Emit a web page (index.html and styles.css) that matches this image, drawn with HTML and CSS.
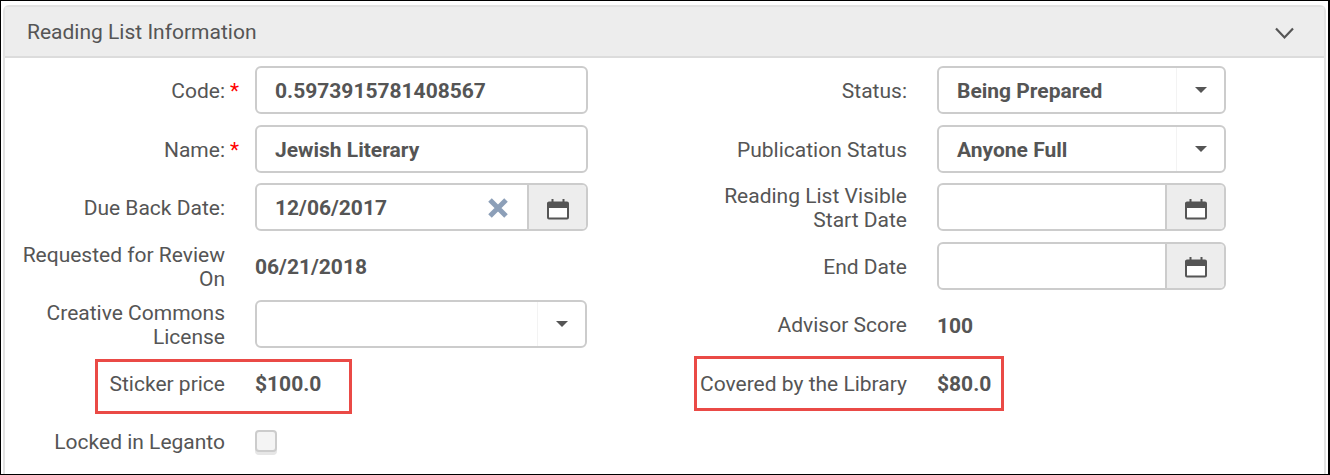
FILE: index.html
```html
<!DOCTYPE html>
<html lang="en">
<head>
<meta charset="utf-8">
<title>Reading List Information</title>
<link rel="stylesheet" href="styles.css">
</head>
<body>
<div class="frame">
  <section class="panel">
    <header class="panel-head">
      <h2 class="panel-title">Reading List Information</h2>
      <svg class="chevron" width="19" height="13" viewBox="0 0 19 13"><path d="M1 1.500 9.500 10.500l8.500-9" fill="none" stroke="#555" stroke-width="2.200"/></svg>
    </header>
    <div class="form">
      <div class="col">
        <div class="row"><label class="label">Code: <span class="req">*</span></label><div class="control"><span class="val">0.5973915781408567</span></div></div>
        <div class="row"><label class="label">Name: <span class="req">*</span></label><div class="control"><span class="val">Jewish Literary</span></div></div>
        <div class="row"><label class="label">Due Back Date:</label>
          <div class="control"><span class="val">12/06/2017</span>
            <svg class="clear" width="20" height="20" viewBox="0 0 20 20"><path d="M2 2 18 18M18 2 2 18" stroke="#8c9fb8" stroke-width="5" fill="none"/></svg>
            <span class="cal-btn"><svg class="cal" width="22" height="22" viewBox="0 0 22 22"><use href="#cal"/></svg></span></div></div>
        <div class="row"><label class="label">Requested for Review<br>On</label><span class="plain">06/21/2018</span></div>
        <div class="row"><label class="label">Creative Commons<br>License</label><div class="control control-narrow"><span class="val"></span><span class="caret-btn"><i class="caret"></i></span></div></div>
        <div class="row"><label class="label">Sticker price</label><span class="plain">$100.0</span></div>
        <div class="row"><label class="label">Locked in Leganto</label><span class="check"></span></div>
      </div>
      <div class="col col-right">
        <div class="row"><label class="label">Status:</label><div class="control"><span class="val">Being Prepared</span><span class="caret-btn"><i class="caret"></i></span></div></div>
        <div class="row"><label class="label">Publication Status</label><div class="control"><span class="val">Anyone Full</span><span class="caret-btn"><i class="caret"></i></span></div></div>
        <div class="row"><label class="label">Reading List Visible<br>Start Date</label><div class="control"><span class="val"></span><span class="cal-btn"><svg class="cal" width="22" height="22" viewBox="0 0 22 22"><use href="#cal"/></svg></span></div></div>
        <div class="row"><label class="label">End Date</label><div class="control"><span class="val"></span><span class="cal-btn"><svg class="cal" width="22" height="22" viewBox="0 0 22 22"><use href="#cal"/></svg></span></div></div>
        <div class="row"><label class="label">Advisor Score</label><span class="plain">100</span></div>
        <div class="row"><label class="label">Covered by the Library</label><span class="plain">$80.0</span></div>
      </div>
    </div>
  </section>
  <div class="mark mark-sticker"></div>
  <div class="mark mark-covered"></div>
</div>
<svg class="defs" width="0" height="0"><defs><symbol id="cal" viewBox="0 0 22 22"><path d="M2 4.500h18a1 1 0 0 1 1 1v14a1 1 0 0 1-1 1H2a1 1 0 0 1-1-1v-14a1 1 0 0 1 1-1Z" fill="#fff" stroke="#555" stroke-width="2"/><path d="M1 4.500h20V10H1Z" fill="#555"/><path d="M5.500 1v4M16.500 1v4" stroke="#555" stroke-width="2"/></symbol></defs></svg>
</body>
</html>
```
FILE: styles.css
```css
* { box-sizing: border-box; }
html, body { margin: 0; padding: 0; background: #fff; }
body { width: 1330px; height: 475px; overflow: hidden; font-family: Roboto, sans-serif; color: #555; }
.frame { position: relative; width: 1330px; height: 475px; border: 1px solid #000; border-right-width: 2px; padding: 4px 2px 0 2px; overflow: hidden; }
.panel { height: 480px; border: 2px solid #e2e2e2; border-bottom: 0; border-radius: 6px 6px 0 0; }
.panel-head { display: flex; align-items: center; justify-content: space-between; height: 51px; padding: 0 30px 0 22px; background: #ededed; border-bottom: 2px solid #dcdcdc; }
.panel-title { margin: 0; font-size: 21px; font-weight: 400; color: #555; }
.chevron { display: block; margin-top: 3px; }
.form { display: grid; grid-template-columns: 682px 1fr; padding-top: 2.750px; }
.col { display: flex; flex-direction: column; }
.row { display: flex; align-items: center; height: 58.500px; }
.label { flex: none; width: 220px; margin-right: 30px; padding-top: 2px; text-align: right; font-size: 21px; line-height: 24px; color: #555; }
.req { position: absolute; margin-left: 5px; color: #f00; }
.control { display: flex; align-items: center; width: 333px; height: 48px; border: 2px solid #ccc; border-radius: 6px; overflow: hidden; background: #fff; }
.col-right .control { width: 289px; }
.control-narrow { width: 332px; }
.val { flex: 1; padding: 2px 0 0 18px; font-size: 21px; font-weight: 700; color: #555; }
.plain { padding-top: 3px; font-size: 21px; font-weight: 700; color: #555; }
.clear { flex: none; margin: 2px 19px 0 0; }
.cal-btn { flex: none; display: flex; align-items: center; justify-content: center; width: 59px; height: 100%; background: #ededed; border-left: 2px solid #ccc; }
.cal { margin-top: 3px; }
.caret-btn { flex: none; display: flex; align-items: center; justify-content: center; width: 48px; height: 100%; border-left: 1px solid #f3f3f3; }
.caret { width: 0; height: 0; border: 6px solid transparent; border-top: 6px solid #555; border-bottom: 0; }
.check { width: 22px; height: 22px; border: 2px solid #ccc; border-radius: 4px; background: #f4f4f4; box-shadow: 0 3px 0 #e6e6e6; }
.mark { position: absolute; border: 3px solid #ea4a46; }
.mark-sticker { left: 94px; top: 358px; width: 257px; height: 55px; }
.mark-covered { left: 693px; top: 355px; width: 310px; height: 55px; }
.defs { position: absolute; }
```
